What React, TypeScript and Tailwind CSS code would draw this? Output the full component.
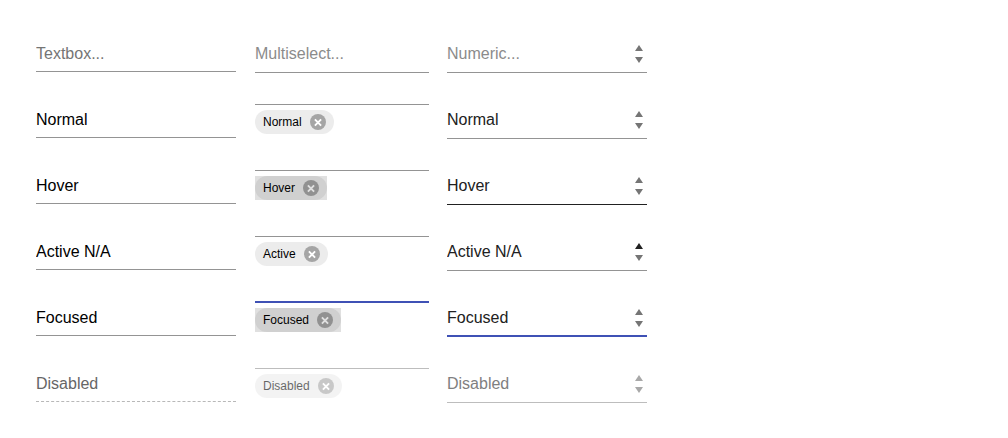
import React from "react";

type State = "empty" | "normal" | "hover" | "active" | "focused" | "disabled";

interface Row {
  state: State;
  text: string;
  chip: string;
}

const rows: Row[] = [
  { state: "empty", text: "", chip: "" },
  { state: "normal", text: "Normal", chip: "Normal" },
  { state: "hover", text: "Hover", chip: "Hover" },
  { state: "active", text: "Active N/A", chip: "Active" },
  { state: "focused", text: "Focused", chip: "Focused" },
  { state: "disabled", text: "Disabled", chip: "Disabled" },
];

function Textbox({ state, text }: { state: State; text: string }) {
  const disabled = state === "disabled";
  const look = disabled
    ? "border-dashed border-[#b8b8b8] text-[#666666]"
    : "border-[#949494] text-black";
  return (
    <input
      type="text"
      aria-label={`Textbox ${state}`}
      placeholder="Textbox..."
      defaultValue={text}
      disabled={disabled}
      className={`h-9 w-[200px] border-b bg-transparent text-base outline-none placeholder:text-[#757575] ${look}`}
    />
  );
}

function Chip({ state, label }: { state: State; label: string }) {
  const shaded = state === "hover" || state === "focused";
  const disabled = state === "disabled";
  return (
    <span className={`inline-flex ${shaded ? "bg-[#e0e0e0]" : ""}`}>
      <span
        className={`flex h-6 items-center gap-2 rounded-full px-2 text-xs text-black ${
          shaded ? "bg-[#d0d0d0]" : "bg-[#ececec]"
        } ${disabled ? "opacity-60" : ""}`}
      >
        {label}
        <button
          type="button"
          aria-label={`Remove ${label}`}
          disabled={disabled}
          className={`flex size-4 items-center justify-center rounded-full ${
            shaded ? "bg-[#919191] text-[#e0e0e0]" : "bg-[#a5a5a5] text-white"
          }`}
        >
          <svg viewBox="0 0 16 16" className="size-4" aria-hidden="true">
            <path d="M4.9 5.4 11.1 11.6M11.1 5.4 4.9 11.6" stroke="currentColor" strokeWidth="1.9" fill="none" />
          </svg>
        </button>
      </span>
    </span>
  );
}

function Multiselect({ state, chip }: { state: State; chip: string }) {
  if (state === "empty") {
    return (
      <input
        type="text"
        aria-label="Multiselect"
        placeholder="Multiselect..."
        className="h-[37px] w-[174px] border-b border-[#949494] bg-transparent text-base outline-none placeholder:text-[#8b8b8b]"
      />
    );
  }
  const line =
    state === "focused"
      ? "mt-px border-t-2 border-[#3f51b5]"
      : state === "disabled"
        ? "mt-0.5 border-t border-[#bdbdbd]"
        : "mt-0.5 border-t border-[#949494]";
  return (
    <div role="group" aria-label={`Multiselect ${state}`} className={`flex w-[174px] pt-[5px] ${line}`}>
      <Chip state={state} label={chip} />
    </div>
  );
}

function Numeric({ state, text }: { state: State; text: string }) {
  const disabled = state === "disabled";
  const line =
    state === "focused"
      ? "border-b-2 border-[#3f51b5]"
      : state === "hover"
        ? "border-b border-[#212121]"
        : disabled
          ? "border-b border-[#bdbdbd]"
          : "border-b border-[#949494]";
  const arrow = disabled ? "text-[#a8a8a8]" : "text-[#757575]";
  const upArrow = state === "active" ? "text-[#212121]" : arrow;
  return (
    <div className={`flex h-[37px] w-[200px] items-start ${line}`}>
      <input
        type="text"
        inputMode="decimal"
        aria-label={`Numeric ${state}`}
        placeholder="Numeric..."
        defaultValue={text}
        disabled={disabled}
        className={`h-[35px] min-w-0 flex-1 bg-transparent text-base outline-none placeholder:text-[#8b8b8b] ${
          disabled ? "text-[#808080]" : "text-[#212121]"
        }`}
      />
      <div className="flex flex-col pt-1.5">
        <button type="button" aria-label="Increase" disabled={disabled} className={`flex h-3 w-4 items-center justify-center ${upArrow}`}>
          <svg viewBox="0 0 8 6" className="h-1.5 w-2" aria-hidden="true">
            <path d="M4 0 8 6H0z" fill="currentColor" />
          </svg>
        </button>
        <button type="button" aria-label="Decrease" disabled={disabled} className={`flex h-3 w-4 items-center justify-center ${arrow}`}>
          <svg viewBox="0 0 8 6" className="h-1.5 w-2" aria-hidden="true">
            <path d="M0 0h8L4 6z" fill="currentColor" />
          </svg>
        </button>
      </div>
    </div>
  );
}

export default function App() {
  return (
    <main className="bg-white px-9 pt-9 font-['Liberation_Sans',Arial,sans-serif]">
      {rows.map((row) => (
        <div key={row.state} className="grid h-[66px] grid-cols-[219px_192px_200px] items-start">
          <Textbox state={row.state} text={row.text} />
          <Multiselect state={row.state} chip={row.chip} />
          <Numeric state={row.state} text={row.text} />
        </div>
      ))}
    </main>
  );
}
